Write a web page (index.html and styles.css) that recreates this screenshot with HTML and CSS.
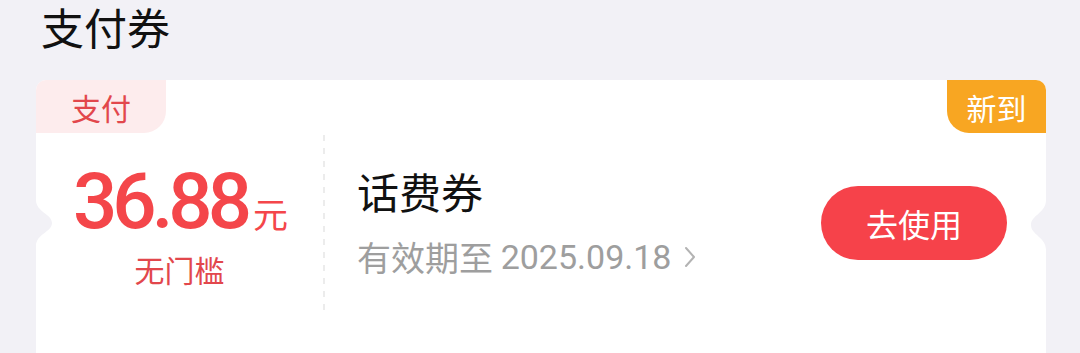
FILE: index.html
```html
<!DOCTYPE html>
<html lang="zh-CN">
<head>
<meta charset="utf-8">
<title>支付券</title>
<link rel="stylesheet" href="styles.css">
</head>
<body>
  <main class="page">
    <h1 class="title">支付券</h1>
    <section class="card">
      <span class="tag tag-pay">支付</span>
      <span class="tag tag-new">新到</span>
      <svg class="notch notch-left" width="17" height="46" viewBox="0 0 17 46"><path d="M0 0 C0 12 16 14 16 23 C16 32 0 34 0 46 Z"/></svg>
      <svg class="notch notch-right" width="16" height="50" viewBox="0 0 16 50"><path d="M16 0 C16 13 1 15 1 25 C1 35 16 37 16 50 Z"/></svg>
      <div class="card-body">
        <div class="amount-col">
          <div class="amount"><span class="num">36.88</span><span class="unit">元</span></div>
          <div class="cond">无门槛</div>
        </div>
        <div class="divider"></div>
        <div class="info-col">
          <div class="name">话费券</div>
          <div class="expire"><span class="exp-label">有效期至&nbsp;</span><span class="exp-date">2025.09.18</span><svg class="chev" width="14" height="24" viewBox="0 0 14 24"><path d="M3 3 L11 12 L3 21" fill="none" stroke="#b3b3b3" stroke-width="2" stroke-linecap="round" stroke-linejoin="round"/></svg></div>
        </div>
        <button class="use-btn" type="button">去使用</button>
      </div>
    </section>
  </main>
</body>
</html>
```

FILE: styles.css
```css
* { box-sizing: border-box; }
html, body { margin: 0; padding: 0; }
body {
  background: #f2f1f6;
  font-family: "Noto Sans CJK SC", "Noto Sans", sans-serif;
  width: 1080px;
  height: 353px;
  overflow: hidden;
}
.page {
  padding: 0 34px 0 36px;
}
.title {
  margin: 0;
  padding-left: 5px;
  height: 80px;
  font-size: 43px;
  line-height: 52px;
  font-weight: 400;
  color: #111;
}
.card {
  position: relative;
  width: 1010px;
  height: 273px;
  background: #fff;
  border-radius: 10px 10px 0 0;
  padding-top: 55px;
}
.tag {
  position: absolute;
  top: 0;
  height: 53px;
  display: flex;
  align-items: center;
  justify-content: center;
  font-size: 30px;
}
.tag-pay {
  left: 0;
  width: 130px;
  background: #fdeced;
  color: #e2474c;
  border-radius: 10px 0 22px 0;
}
.tag-new {
  right: 0;
  width: 99px;
  background: #f8a622;
  color: #fff;
  border-radius: 0 10px 0 22px;
}
.notch { position: absolute; fill: #f2f1f6; }
.notch-left { left: 0; top: 120px; }
.notch-right { right: 0; top: 120px; }
.card-body {
  display: flex;
  align-items: flex-start;
  height: 175px;
}
.amount-col {
  width: 287px;
  padding-top: 32px;
  display: flex;
  flex-direction: column;
  align-items: center;
  color: #f4464a;
}
.amount {
  height: 70px;
  line-height: 70px;
  white-space: nowrap;
  padding-left: 2px;
}
.num {
  font-family: "Roboto", sans-serif;
  font-size: 78px;
  letter-spacing: -5px;
  font-weight: 500;
}
.unit {
  font-size: 35px;
  margin-left: 6px;
}
.cond {
  margin-top: 12px;
  font-size: 30px;
  line-height: 40px;
  color: #e2474c;
}
.divider {
  width: 2px;
  height: 175px;
  background: repeating-linear-gradient(to bottom, #ececec 0 6px, transparent 6px 13px);
}
.info-col {
  flex: 1;
  padding-left: 32px;
  padding-top: 35px;
}
.name {
  font-size: 42px;
  line-height: 42px;
  color: #111;
  font-weight: 400;
}
.expire {
  margin-top: 25px;
  font-size: 34px;
  line-height: 40px;
  color: #9e9e9e;
  display: flex;
  align-items: center;
  white-space: nowrap;
}
.exp-date {
  font-family: "Roboto", sans-serif;
}
.chev { margin-left: 12px; }
.use-btn {
  align-self: center;
  margin-right: 39px;
  width: 186px;
  height: 74px;
  border: 0;
  border-radius: 37px;
  background: #f6424a;
  color: #fff;
  font-family: "Noto Sans CJK SC", sans-serif;
  font-size: 32px;
  padding: 0;
}
```
